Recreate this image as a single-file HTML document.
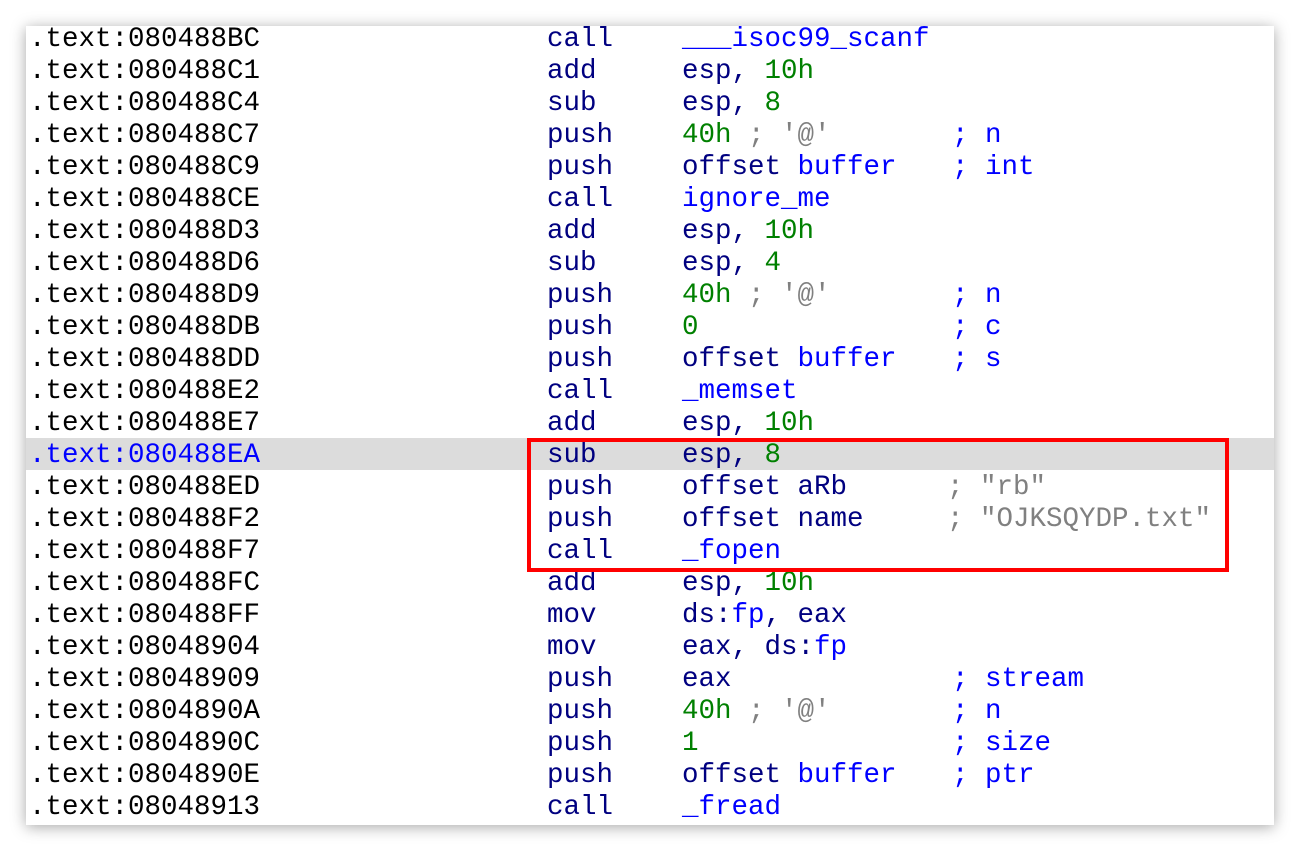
<!DOCTYPE html>
<html><head><style>
body{margin:0;width:1300px;height:852px;background:#fff;overflow:hidden;position:relative}
.card{position:absolute;left:26px;top:26px;width:1248px;height:799px;background:#fff;box-shadow:0 2px 14px rgba(0,0,0,0.35);overflow:hidden}
.r{position:absolute;left:0;width:1248px;height:32px;font:27.5px/32px "Liberation Mono","DejaVu Sans Mono",monospace;white-space:pre;color:#000}
.r span{position:absolute;top:2px}
.a{left:3px}.m{left:521px;color:#000080}.o{left:656px;color:#000080}.c{left:926px;color:#0000ff}
.b{color:#0000ff}.g{color:#008000}.y{color:#808080}
i{font-style:normal}
.hl{background:#dcdcdc}
.box{position:absolute;left:501px;top:412px;width:694px;height:126px;border:4px solid #ff0000}
</style></head><body>
<div class="card">
<div class="r" style="top:-4px"><span class="a">.text:080488BC</span><span class="m">call</span><span class="o b">___isoc99_scanf</span></div>
<div class="r" style="top:28px"><span class="a">.text:080488C1</span><span class="m">add</span><span class="o">esp, <i class="g">10h</i></span></div>
<div class="r" style="top:60px"><span class="a">.text:080488C4</span><span class="m">sub</span><span class="o">esp, <i class="g">8</i></span></div>
<div class="r" style="top:92px"><span class="a">.text:080488C7</span><span class="m">push</span><span class="o"><i class="g">40h</i> <i class="y">; '@'</i></span><span class="c">; n</span></div>
<div class="r" style="top:124px"><span class="a">.text:080488C9</span><span class="m">push</span><span class="o">offset <i class="b">buffer</i></span><span class="c">; int</span></div>
<div class="r" style="top:156px"><span class="a">.text:080488CE</span><span class="m">call</span><span class="o b">ignore_me</span></div>
<div class="r" style="top:188px"><span class="a">.text:080488D3</span><span class="m">add</span><span class="o">esp, <i class="g">10h</i></span></div>
<div class="r" style="top:220px"><span class="a">.text:080488D6</span><span class="m">sub</span><span class="o">esp, <i class="g">4</i></span></div>
<div class="r" style="top:252px"><span class="a">.text:080488D9</span><span class="m">push</span><span class="o"><i class="g">40h</i> <i class="y">; '@'</i></span><span class="c">; n</span></div>
<div class="r" style="top:284px"><span class="a">.text:080488DB</span><span class="m">push</span><span class="o g">0</span><span class="c">; c</span></div>
<div class="r" style="top:316px"><span class="a">.text:080488DD</span><span class="m">push</span><span class="o">offset <i class="b">buffer</i></span><span class="c">; s</span></div>
<div class="r" style="top:348px"><span class="a">.text:080488E2</span><span class="m">call</span><span class="o b">_memset</span></div>
<div class="r" style="top:380px"><span class="a">.text:080488E7</span><span class="m">add</span><span class="o">esp, <i class="g">10h</i></span></div>
<div class="r hl" style="top:412px"><span class="a b">.text:080488EA</span><span class="m">sub</span><span class="o">esp, <i class="g">8</i></span></div>
<div class="r" style="top:444px"><span class="a">.text:080488ED</span><span class="m">push</span><span class="o">offset aRb</span><span class="c y" style="left:921px">; "rb"</span></div>
<div class="r" style="top:476px"><span class="a">.text:080488F2</span><span class="m">push</span><span class="o">offset name</span><span class="c y" style="left:921px">; "OJKSQYDP.txt"</span></div>
<div class="r" style="top:508px"><span class="a">.text:080488F7</span><span class="m">call</span><span class="o b">_fopen</span></div>
<div class="r" style="top:540px"><span class="a">.text:080488FC</span><span class="m">add</span><span class="o">esp, <i class="g">10h</i></span></div>
<div class="r" style="top:572px"><span class="a">.text:080488FF</span><span class="m">mov</span><span class="o">ds:<i class="b">fp</i>, eax</span></div>
<div class="r" style="top:604px"><span class="a">.text:08048904</span><span class="m">mov</span><span class="o">eax, ds:<i class="b">fp</i></span></div>
<div class="r" style="top:636px"><span class="a">.text:08048909</span><span class="m">push</span><span class="o">eax</span><span class="c">; stream</span></div>
<div class="r" style="top:668px"><span class="a">.text:0804890A</span><span class="m">push</span><span class="o"><i class="g">40h</i> <i class="y">; '@'</i></span><span class="c">; n</span></div>
<div class="r" style="top:700px"><span class="a">.text:0804890C</span><span class="m">push</span><span class="o g">1</span><span class="c">; size</span></div>
<div class="r" style="top:732px"><span class="a">.text:0804890E</span><span class="m">push</span><span class="o">offset <i class="b">buffer</i></span><span class="c">; ptr</span></div>
<div class="r" style="top:764px"><span class="a">.text:08048913</span><span class="m">call</span><span class="o b">_fread</span></div>
<div class="box"></div>
</div>
</body></html>
